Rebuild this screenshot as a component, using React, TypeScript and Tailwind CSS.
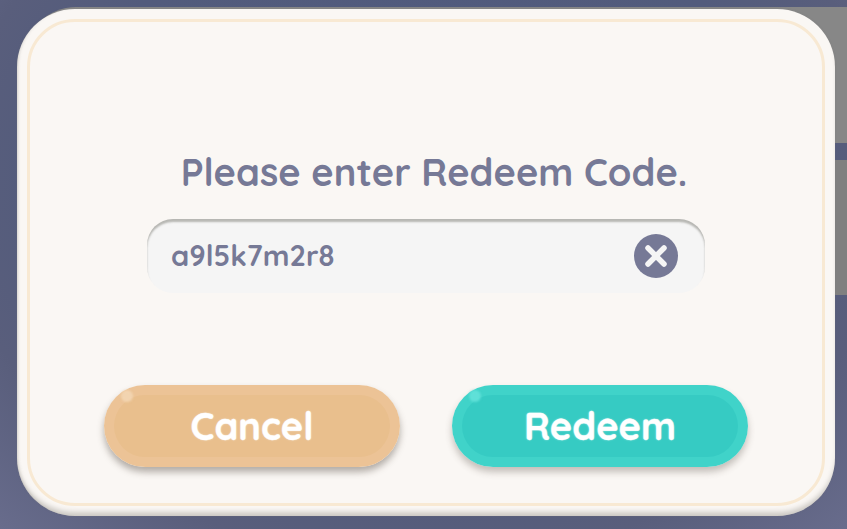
const font = { fontFamily: '"Quicksand", "Nunito", Lato, "Noto Sans", sans-serif' };

function GameButton({ label, outer, inner, dot }: { label: string; outer: string; inner: string; dot: string }) {
  return (
    <button className={`relative flex h-[82px] w-[296px] items-center justify-center rounded-full p-[10px] ${outer}`}>
      <span className={`absolute left-[17px] top-[5px] h-[12px] w-[12px] rounded-full blur-[1px] ${dot}`} />
      <span className={`flex h-full w-full items-center justify-center rounded-full text-[38px] font-bold text-white [-webkit-text-stroke:0.3px_white] [text-shadow:0_0_2px_rgba(255,255,255,0.6)] ${inner}`}>
        {label}
      </span>
    </button>
  );
}

export default function App() {
  return (
    <div className="relative flex h-[529px] w-[847px] overflow-hidden bg-[radial-gradient(ellipse_at_50%_35%,#4f5a7e_0%,#525b7c_60%,#595e7c_78%,#686c8c_100%)] pl-[17px] pt-[9px]" style={font}>
      {/* dimmed cards behind the dialog */}
      <div className="absolute left-[24px] right-0 top-[7px] h-[136px] rounded-tl-[52px] bg-[#878787]" />
      <div className="absolute left-[100px] right-0 top-[160px] h-[135px] bg-[#808080]" />

      <div className="relative h-[507px] w-[818px] rounded-[58px] bg-[#faf7f4] p-[10px] shadow-[inset_0_-6px_5px_-2px_rgba(110,105,95,0.32),inset_3px_0_3px_-2px_rgba(110,105,95,0.2),0_0_2px_rgba(120,120,120,0.35)]">
        <div className="flex h-full w-full flex-col items-center rounded-[48px] border-[3px] border-[#f8e9d3] pt-[126px]">
          <h1 className="pl-[16px] text-[38px] font-bold leading-[48px] text-[#767996]">Please enter Redeem Code.</h1>
          <div className="mt-[23px] flex h-[74px] w-[558px] items-center justify-between rounded-[26px] bg-[#f5f5f5] pl-[24px] pr-[27px] shadow-[inset_0_3px_2px_rgba(90,90,80,0.4)]">
            <span className="text-[29px] font-bold text-[#767996]">a9l5k7m2r8</span>
            <span className="flex h-[44px] w-[44px] items-center justify-center rounded-full bg-[#767996]">
              <svg width="26" height="26" viewBox="0 0 26 26" fill="none" stroke="#f5f5f5" strokeWidth="5.5" strokeLinecap="round">
                <path d="M5 5 L21 21 M21 5 L5 21" />
              </svg>
            </span>
          </div>
          <div className="mt-[92px] flex w-[644px] items-end justify-between">
            <div className="rounded-full shadow-[0_5px_7px_rgba(70,60,50,0.4)]">
              <GameButton label="Cancel" outer="bg-[#ecc396]" inner="bg-[#e9bf8d]" dot="bg-[#f2d4b0]" />
            </div>
            <div className="rounded-full shadow-[0_5px_7px_rgba(70,60,50,0.3)]">
              <GameButton label="Redeem" outer="bg-[#40d3c9]" inner="bg-[#36cbc3]" dot="bg-[#5fe0d8]" />
            </div>
          </div>
        </div>
      </div>
    </div>
  );
}
